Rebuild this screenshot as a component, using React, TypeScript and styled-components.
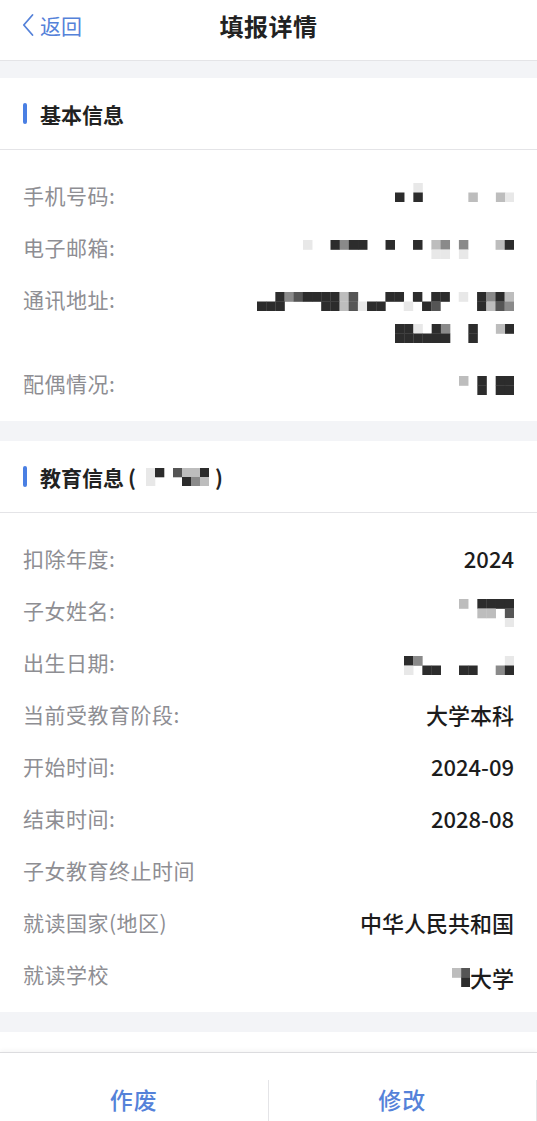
import React from 'react';
import styled, { createGlobalStyle } from 'styled-components';

// == constants ====================================================================================
const Colors = {
  blue: '#4a7fe3',
  blueText: '#5582d9',
  label: '#8e8e93',
  value: '#1c1c1c',
  line: '#e4e4e7',
  back: '#f3f4f7',
};

const MosaicColors: Record<string, string> = {
  k: '#2c2c2c',
  d: '#555555',
  g: '#8a8a8a',
  l: '#bdbdbd',
  w: '#e8e8e8',
};

// == styles =======================================================================================
const GlobalStyle = createGlobalStyle`
  body {
    margin: 0;
    background: ${ Colors.back };
    font-family: "Noto Sans CJK SC", "Noto Sans", sans-serif;
  }
`;

const Page = styled.div`
  display: flex;
  flex-direction: column;
  width: 537px;
  height: 1121px;
  overflow: hidden;
  background: ${ Colors.back };
`;

const NavBar = styled.header`
  display: grid;
  grid-template-columns: 1fr auto 1fr;
  align-items: center;
  height: 50px;
  padding-bottom: 10px;
  flex-shrink: 0;
  background: #fff;
  border-bottom: 1px solid ${ Colors.line };
`;

const BackLink = styled.a`
  display: flex;
  align-items: center;
  gap: 6px;
  padding-left: 22px;
  color: ${ Colors.blueText };
  font-size: 21px;
  line-height: 1;
  text-decoration: none;
`;

const Title = styled.h1`
  margin: 0;
  font-size: 24px;
  font-weight: 600;
  color: #222;
  letter-spacing: 0.5px;
`;

const Content = styled.main`
  flex: 1;
  min-height: 0;
  overflow: hidden;
  display: flex;
  flex-direction: column;
  gap: 20px;
  padding-top: 17px;
`;

const Card = styled.section`
  flex-shrink: 0;
  background: #fff;
`;

const PeekCard = styled.div`
  flex-shrink: 0;
  height: 40px;
  background: #fff;
`;

const CardHeader = styled.div`
  display: flex;
  align-items: center;
  height: 71px;
  padding-left: 23px;
  border-bottom: 1px solid ${ Colors.line };
`;

const Marker = styled.span`
  width: 4px;
  height: 21px;
  border-radius: 2px;
  background: ${ Colors.blue };
  margin-right: 13px;
`;

const CardTitle = styled.h2`
  display: flex;
  align-items: center;
  margin: 0;
  font-size: 21px;
  font-weight: 600;
  color: #222;
`;

const Paren = styled.span<{ $side: 'left' | 'right' }>`
  margin: ${ ( p ) => ( p.$side === 'left' ? '0 10px 0 4px' : '0 0 0 6px' ) };
`;

const CardBody = styled.div`
  padding: 19px 23px 12px;
`;

const Row = styled.div`
  display: flex;
  justify-content: space-between;
  align-items: flex-start;
  padding: 10px 0;
  line-height: 32px;
`;

const Label = styled.span`
  font-size: 21px;
  color: ${ Colors.label };
  letter-spacing: 0.5px;
`;

const Value = styled.span`
  display: flex;
  flex-direction: column;
  align-items: flex-end;
  font-size: 22px;
  font-weight: 500;
  color: ${ Colors.value };
`;

const MosaicLine = styled.span<{ $shift?: number }>`
  display: flex;
  align-items: center;
  justify-content: flex-end;
  height: 32px;
  transform: translateY(${ ( p ) => p.$shift ?? 0 }px);
`;

const BottomBar = styled.footer`
  display: flex;
  align-items: flex-end;
  height: 68px;
  flex-shrink: 0;
  background: #fff;
  border-top: 1px solid #dcdcdf;
  box-shadow: 0 -2px 4px rgba(0, 0, 0, 0.04);
  position: relative;
`;

const ActionButton = styled.button`
  flex: 1;
  height: 41px;
  padding: 0 0 4px;
  border: none;
  border-right: 1px solid ${ Colors.line };
  background: none;
  color: ${ Colors.blueText };
  font-family: inherit;
  font-size: 23px;
  font-weight: 500;
  letter-spacing: 1px;
`;

// == mosaic (redacted values) ======================================================================
const Mosaic = ( { rows, cell = 9.17, height = 9.5 }: {
  rows: string[];
  cell?: number;
  height?: number;
} ): JSX.Element => {
  const cols = rows[ 0 ].length;
  return <svg width={ cols * cell } height={ rows.length * height } style={ { display: 'block' } }>
    { rows.map( ( r, y ) => r.split( '' ).map( ( ch, x ) => (
      MosaicColors[ ch ]
        ? <rect key={ `${ x }-${ y }` } x={ x * cell } y={ y * height } width={ cell + 0.3 } height={ height + 0.3 } fill={ MosaicColors[ ch ] } />
        : null
    ) ) ) }
  </svg>;
};

// == data =========================================================================================
type Item = { label: string; value?: string; lines?: string[][]; shift?: number; suffix?: string };

const basicInfo: Item[] = [
  { label: '手机号码:', lines: [ [ '..w..........', 'k.k.....l..lw' ] ], shift: -3 },
  { label: '电子邮箱:', lines: [ [ 'w..kgkk..k..k.lg.g...lk', '..............ww.w.....' ] ], shift: 2 },
  {
    label: '通讯地址:',
    lines: [
      [ '..kgdkkkkld...kk.k.kk.w.kgkl', 'kkk....kkldwkk..w.kd....kldg' ],
      [ 'kkw.kg..k..lk', 'kkkkkk..k....' ],
    ],
    shift: 2,
  },
  { label: '配偶情况:', lines: [ [ 'l.k.kk', '..k.kk' ] ], shift: 2 },
];

const educationInfo: Item[] = [
  { label: '扣除年度:', value: '2024' },
  { label: '子女姓名:', lines: [ [ 'l.kkkk', '..ll.d', '.....w' ] ], shift: 3 },
  { label: '出生日期:', lines: [ [ 'kg.........w', 'w.kk..kk..gk' ] ], shift: 3 },
  { label: '当前受教育阶段:', value: '大学本科' },
  { label: '开始时间:', value: '2024-09' },
  { label: '结束时间:', value: '2028-08' },
  { label: '子女教育终止时间', value: '' },
  { label: '就读国家(地区)', value: '中华人民共和国' },
  { label: '就读学校', lines: [ [ 'ld', '.k' ] ], shift: 3, suffix: '大学' },
];

// == component ====================================================================================
const InfoRow = ( { item }: { item: Item } ): JSX.Element => (
  <Row>
    <Label>{ item.label }</Label>
    <Value>
      { item.value != null && <span>{ item.value }</span> }
      { item.lines?.map( ( rows, i ) => (
        <MosaicLine key={ i } $shift={ item.shift }>
          <Mosaic rows={ rows } />
          { item.suffix && <span>{ item.suffix }</span> }
        </MosaicLine>
      ) ) }
    </Value>
  </Row>
);

const App = (): JSX.Element => (
  <>
    <GlobalStyle />
    <Page>
      <NavBar>
        <BackLink href="#">
          <svg width="12" height="24" viewBox="0 0 12 24" fill="none">
            <polyline points="10.5,2 1.8,12 10.5,22" stroke={ Colors.blueText } strokeWidth="1.8" strokeLinecap="round" strokeLinejoin="round" />
          </svg>
          返回
        </BackLink>
        <Title>填报详情</Title>
        <span />
      </NavBar>

      <Content>
        <Card>
          <CardHeader>
            <Marker />
            <CardTitle>基本信息</CardTitle>
          </CardHeader>
          <CardBody>
            { basicInfo.map( ( item ) => <InfoRow key={ item.label } item={ item } /> ) }
          </CardBody>
        </Card>

        <Card>
          <CardHeader>
            <Marker />
            <CardTitle>
              教育信息<Paren $side="left">(</Paren>
              <Mosaic rows={ [ 'wk.dllk', 'w...kgl' ] } cell={ 9 } height={ 9 } />
              <Paren $side="right">)</Paren>
            </CardTitle>
          </CardHeader>
          <CardBody>
            { educationInfo.map( ( item ) => <InfoRow key={ item.label } item={ item } /> ) }
          </CardBody>
        </Card>

        <PeekCard />
      </Content>

      <BottomBar>
        <ActionButton>作废</ActionButton>
        <ActionButton>修改</ActionButton>
      </BottomBar>
    </Page>
  </>
);

export default App;
